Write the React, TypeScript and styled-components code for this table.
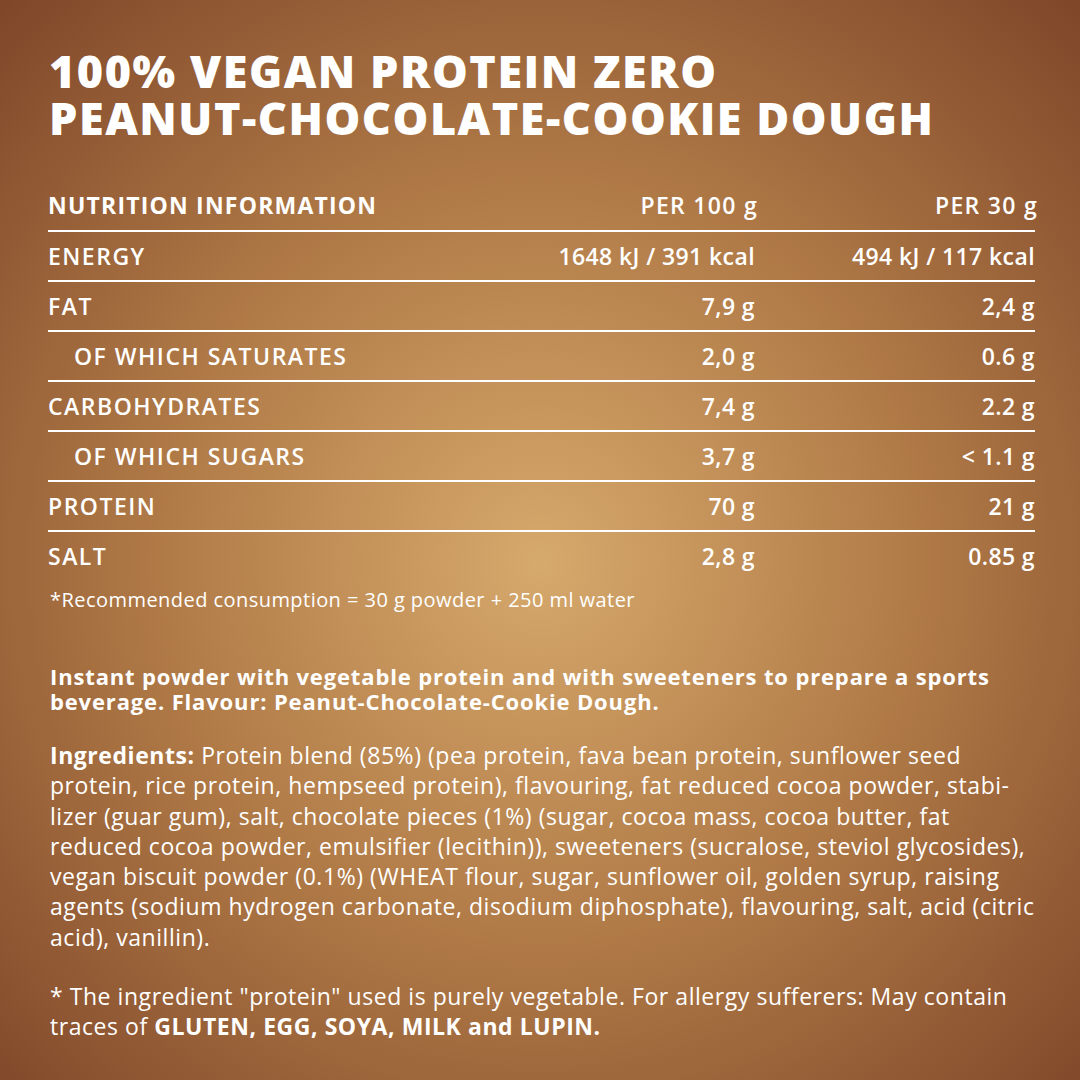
import React from 'react';
import styled, { createGlobalStyle } from 'styled-components';

const GlobalStyle = createGlobalStyle`
  html, body {
    margin: 0;
    padding: 0;
  }
  body {
    font-family: "Open Sans", Lato, sans-serif;
    color: #fff;
  }
`;

const Page = styled.div`
  width: 1080px;
  height: 1080px;
  box-sizing: border-box;
  padding: 47px 45px 0 48px;
  background: radial-gradient(ellipse 75% 75% at 50% 52%, #d6a96c 0%, #b27c48 45%, #7b4226 100%);
  overflow: hidden;
`;

const Title = styled.h1`
  margin: 0 0 0 1px;
  font-size: 45px;
  line-height: 47px;
  font-weight: 800;
  letter-spacing: 1.5px;
  text-transform: uppercase;
  white-space: nowrap;
`;

const Table = styled.div`
  margin-top: 39px;
  display: flex;
  flex-direction: column;
`;

const Row = styled.div<{ $head?: boolean }>`
  display: grid;
  grid-template-columns: 1fr 260px 280px;
  align-items: center;
  height: 50px;
  box-sizing: border-box;
  border-top: ${(p) => (p.$head ? 'none' : '2px solid #fff')};
  font-size: 23px;
`;

const Label = styled.span<{ $sub?: boolean; $head?: boolean }>`
  padding-left: ${(p) => (p.$sub ? '26px' : '0')};
  font-weight: ${(p) => (p.$head ? 700 : 600)};
  letter-spacing: ${(p) => (p.$head ? '1.2px' : '1.5px')};
`;

const Value = styled.span<{ $head?: boolean }>`
  text-align: right;
  font-weight: 600;
  letter-spacing: ${(p) => (p.$head ? '1.3px' : '0.4px')};
  margin-right: ${(p) => (p.$head ? '-3px' : '0')};
`;

const Note = styled.p`
  margin: 8px 0 0 2px;
  font-size: 20px;
  line-height: 24px;
  font-weight: 500;
  letter-spacing: 0.45px;
`;

const Lead = styled.p`
  margin: 52px 0 0 2px;
  font-size: 22px;
  line-height: 25px;
  font-weight: 700;
  letter-spacing: 0.85px;
  white-space: nowrap;
`;

const Body = styled.p<{ $gap: number }>`
  margin: ${(p) => p.$gap}px 0 0 2px;
  font-size: 23px;
  line-height: 30.3px;
  font-weight: 500;
  letter-spacing: 0.55px;
  white-space: nowrap;

  b {
    font-weight: 700;
  }
`;

const rows: { label: string; sub?: boolean; a: string; b: string }[] = [
  { label: 'ENERGY', a: '1648 kJ / 391 kcal', b: '494 kJ / 117 kcal' },
  { label: 'FAT', a: '7,9 g', b: '2,4 g' },
  { label: 'OF WHICH SATURATES', sub: true, a: '2,0 g', b: '0.6 g' },
  { label: 'CARBOHYDRATES', a: '7,4 g', b: '2.2 g' },
  { label: 'OF WHICH SUGARS', sub: true, a: '3,7 g', b: '< 1.1 g' },
  { label: 'PROTEIN', a: '70 g', b: '21 g' },
  { label: 'SALT', a: '2,8 g', b: '0.85 g' },
];

const App: React.FC = () => {
  return (
    <Page>
      <GlobalStyle />
      <Title>
        100% Vegan Protein Zero
        <br />
        Peanut-Chocolate-Cookie Dough
      </Title>

      <Table>
        <Row $head>
          <Label $head>NUTRITION INFORMATION</Label>
          <Value $head>PER 100 g</Value>
          <Value $head>PER 30 g</Value>
        </Row>
        {rows.map((r) => (
          <Row key={r.label}>
            <Label $sub={r.sub}>{r.label}</Label>
            <Value>{r.a}</Value>
            <Value>{r.b}</Value>
          </Row>
        ))}
      </Table>

      <Note>*Recommended consumption = 30 g powder + 250 ml water</Note>

      <Lead>
        Instant powder with vegetable protein and with sweeteners to prepare a sports
        <br />
        beverage. Flavour: Peanut-Chocolate-Cookie Dough.
      </Lead>

      <Body $gap={26}>
        <b>Ingredients:</b> Protein blend (85%) (pea protein, fava bean protein, sunflower seed
        <br />
        protein, rice protein, hempseed protein), flavouring, fat reduced cocoa powder, stabi-
        <br />
        lizer (guar gum), salt, chocolate pieces (1%) (sugar, cocoa mass, cocoa butter, fat
        <br />
        reduced cocoa powder, emulsifier (lecithin)), sweeteners (sucralose, steviol glycosides),
        <br />
        vegan biscuit powder (0.1%) (WHEAT flour, sugar, sunflower oil, golden syrup, raising
        <br />
        agents (sodium hydrogen carbonate, disodium diphosphate), flavouring, salt, acid (citric
        <br />
        acid), vanillin).
      </Body>

      <Body $gap={29}>
        * The ingredient "protein" used is purely vegetable. For allergy sufferers: May contain
        <br />
        traces of <b>GLUTEN, EGG, SOYA, MILK and LUPIN.</b>
      </Body>
    </Page>
  );
};

export default App;
